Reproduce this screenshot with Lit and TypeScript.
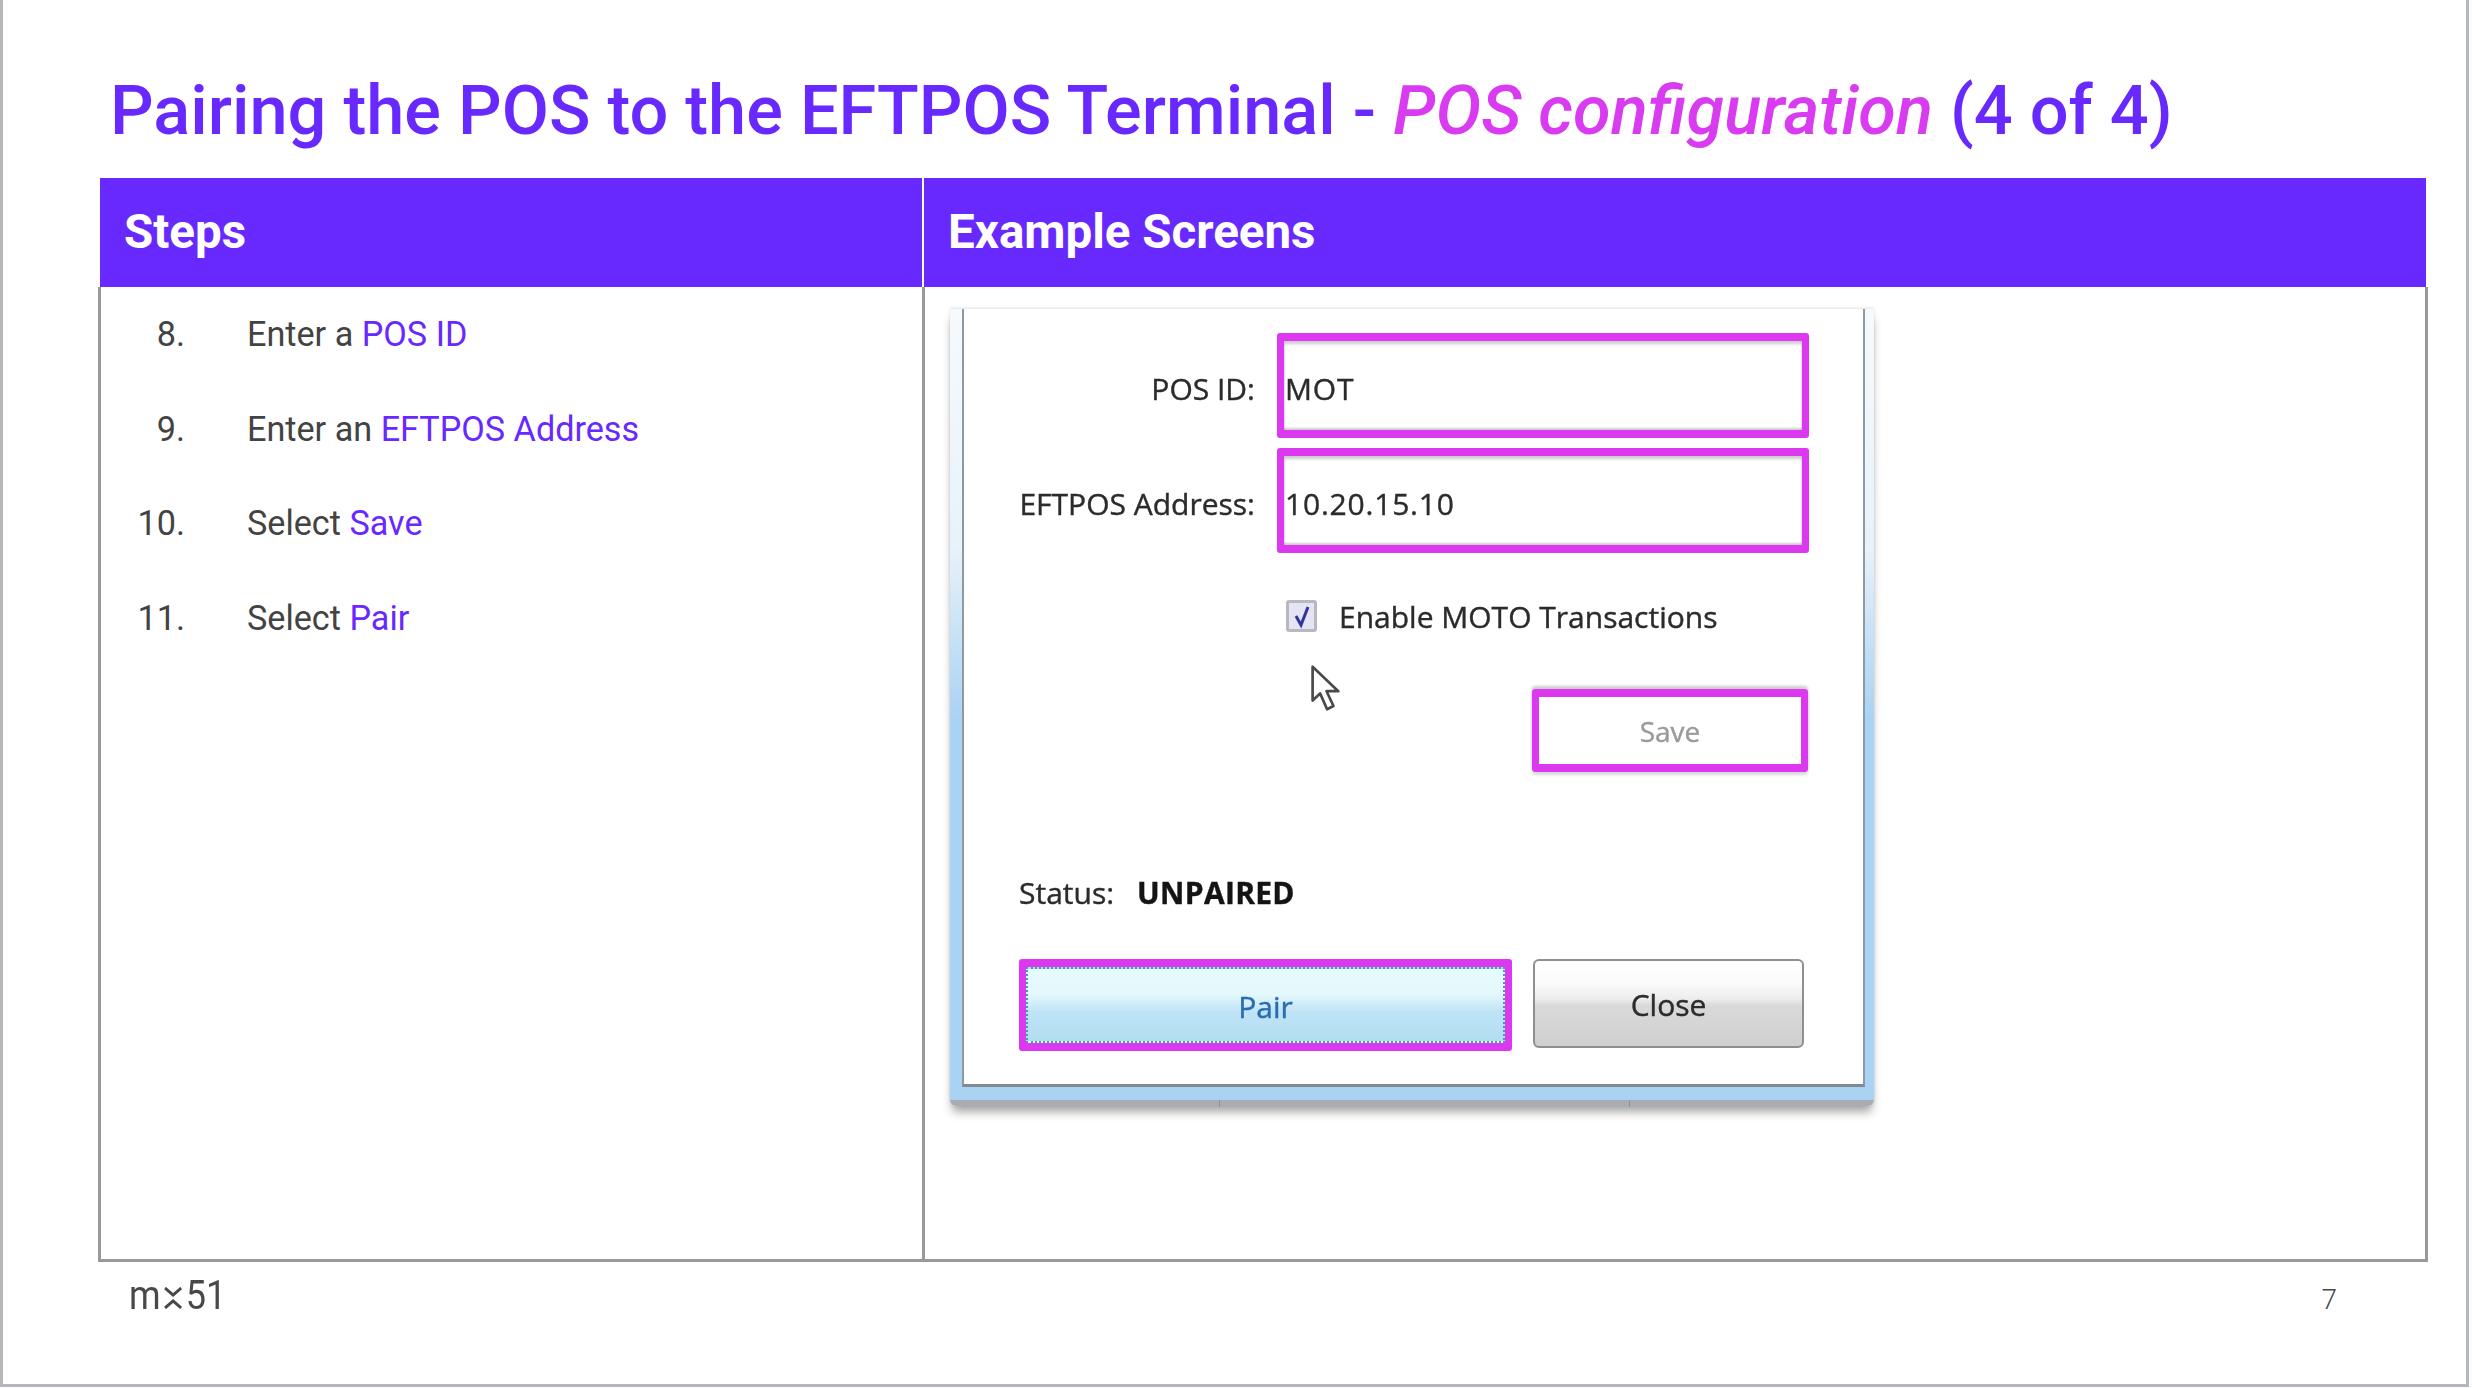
import {LitElement, css, html} from 'lit';
import {customElement} from 'lit/decorators.js';

const STEPS = [
  {num: '8.', text: 'Enter a ', key: 'POS ID'},
  {num: '9.', text: 'Enter an ', key: 'EFTPOS Address'},
  {num: '10.', text: 'Select ', key: 'Save'},
  {num: '11.', text: 'Select ', key: 'Pair'},
];

@customElement('pos-dialog')
export class PosDialog extends LitElement {
  render() {
    return html`
      <div class="frame">
        <div class="panel">
          <div class="form">
            <span class="label blur">POS ID:</span>
            <div class="field"><span class="value blur">MOT</span></div>
            <span class="label blur">EFTPOS Address:</span>
            <div class="field"><span class="value blur">10.20.15.10</span></div>
          </div>
          <div class="check-row">
            <span class="checkbox">
              <svg viewBox="0 0 30 30" width="30" height="30">
                <path d="M9 15l5 9 7-18" fill="none" stroke="#34349c" stroke-width="3" />
              </svg>
            </span>
            <span class="blur">Enable MOTO Transactions</span>
          </div>
          <svg class="cursor" viewBox="0 0 28 43" width="30" height="47" preserveAspectRatio="none">
            <path
              d="M1.5 1.5v31l7-6.500 6.500 14.500 6-3-6.500-13.500h11z"
              fill="#fff"
              stroke="#4a4a4a"
              stroke-width="2.500"
              stroke-linejoin="round"
            />
          </svg>
          <div class="save-row">
            <div class="save"><span class="blur">Save</span></div>
          </div>
          <div class="status blur"><span>Status:</span><b>UNPAIRED</b></div>
          <div class="buttons">
            <div class="pair">
              <div class="pair-inner"><span class="blur">Pair</span></div>
            </div>
            <div class="close"><span class="blur">Close</span></div>
          </div>
        </div>
        <i class="tick first"></i>
        <i class="tick second"></i>
      </div>
    `;
  }

  static styles = css`
    :host {
      display: block;
      width: 924px;
      font-family: 'Open Sans', 'Noto Sans', sans-serif;
      font-size: 30px;
      color: #2b2b2b;
    }
    .blur {
      filter: blur(0.7px);
      -webkit-text-stroke: 0.4px currentColor;
    }
    .frame {
      position: relative;
      padding: 0 9px 13px 12px;
      background: linear-gradient(#f6fafd 0%, #e8f2fa 30%, #a9d2f3 52%, #a9d2f3 100%);
      box-shadow: 0 8px 10px -2px rgba(0, 0, 0, 0.35), 0 -1px 3px rgba(0, 0, 0, 0.12);
      border-bottom: 6px solid #a7adb3;
      border-radius: 0 0 6px 6px;
    }
    .panel {
      position: relative;
      height: 778px;
      box-sizing: border-box;
      padding: 24px 0 0 55px;
      background: #fff;
      border-left: 2px solid #8d99a3;
      border-right: 2px solid #8d99a3;
      border-bottom: 3px solid #7f8a94;
    }
    .form {
      display: grid;
      grid-template-columns: 236px 532px;
      column-gap: 22px;
      row-gap: 10px;
      align-items: center;
    }
    .label {
      justify-self: end;
      padding-top: 6px;
      white-space: nowrap;
    }
    .field {
      display: flex;
      align-items: center;
      box-sizing: border-box;
      height: 105px;
      padding: 6px 0 0 1px;
      border: solid #dc38f0;
      border-width: 8px 7px;
      border-radius: 3px;
      box-shadow: inset 0 3px 3px rgba(0, 0, 0, 0.2), inset 0 -2px 2px rgba(0, 0, 0, 0.2);
      white-space: nowrap;
    }
    .value {
      letter-spacing: 0.8px;
    }
    .check-row {
      display: flex;
      align-items: center;
      gap: 22px;
      height: 32px;
      margin: 47px 0 0 267px;
      white-space: nowrap;
    }
    .checkbox {
      display: block;
      width: 31px;
      height: 32px;
      box-sizing: border-box;
      border: 3px solid #b8b8c0;
      border-radius: 3px;
      background: #e4e4f2;
      filter: blur(0.5px);
    }
    .checkbox svg {
      display: block;
      margin: -2px;
    }
    .cursor {
      position: absolute;
      left: 347px;
      top: 356px;
      filter: blur(0.6px);
    }
    .save-row {
      display: flex;
      margin: 57px 0 0 513px;
    }
    .save {
      display: flex;
      align-items: center;
      justify-content: center;
      box-sizing: border-box;
      width: 276px;
      height: 83px;
      border: solid #dc38f0;
      border-width: 8px 7px;
      border-radius: 3px;
      color: #9a9a9a;
      font-size: 28px;
      box-shadow: 0 -3px 3px rgba(0, 0, 0, 0.2), 0 3px 3px rgba(0, 0, 0, 0.15);
    }
    .status {
      display: flex;
      gap: 23px;
      height: 40px;
      margin-top: 100px;
      align-items: center;
      white-space: nowrap;
    }
    .status b {
      color: #141414;
      font-weight: 700;
      letter-spacing: 0.3px;
    }
    .buttons {
      display: flex;
      align-items: flex-start;
      gap: 21px;
      margin-top: 47px;
    }
    .pair {
      box-sizing: border-box;
      width: 493px;
      height: 92px;
      border: solid #dc38f0;
      border-width: 8px 7px;
      border-radius: 3px;
    }
    .pair-inner {
      display: flex;
      align-items: center;
      justify-content: center;
      height: 100%;
      box-sizing: border-box;
      padding-top: 2px;
      border: 2px dotted #3f9fb2;
      color: #2a6cb0;
      background: linear-gradient(#e6fbfd 0%, #e4f8fb 35%, #bfe3f6 60%, #b2deef 100%);
    }
    .close {
      display: flex;
      align-items: center;
      justify-content: center;
      box-sizing: border-box;
      width: 271px;
      height: 89px;
      padding-top: 2px;
      border: 2px solid #8f8f8f;
      border-radius: 6px;
      background: linear-gradient(#fff 0%, #fbfbfb 25%, #ececec 45%, #dadada 52%, #cfcfcf 100%);
    }
    .tick {
      position: absolute;
      top: 100%;
      width: 1px;
      height: 7px;
      background: #8b9299;
    }
    .tick.first {
      left: 269px;
    }
    .tick.second {
      left: 679px;
    }
  `;
}

@customElement('app-root')
export class AppRoot extends LitElement {
  render() {
    return html`
      <div class="slide">
        <h1>
          Pairing the POS to the EFTPOS Terminal - <em>POS configuration</em> (4 of 4)
        </h1>
        <div class="table">
          <div class="head">Steps</div>
          <div class="head">Example Screens</div>
          <div class="cell">
            <ol>
              ${STEPS.map(
                (step) => html`
                  <li>
                    <span class="num">${step.num}</span>
                    <span>${step.text}<span class="key">${step.key}</span></span>
                  </li>
                `
              )}
            </ol>
          </div>
          <div class="cell shots">
            <pos-dialog></pos-dialog>
          </div>
        </div>
        <footer>
          <div class="logo">
            <span>m</span>
            <svg viewBox="0 0 20 22" width="20" height="22">
              <path d="M1 1l9 7 9-7M1 21l9-7 9 7" fill="none" stroke="#484848" stroke-width="3" />
            </svg>
            <span>51</span>
          </div>
          <span class="page">7</span>
        </footer>
      </div>
    `;
  }

  static styles = css`
    :host {
      display: block;
      width: 2472px;
      height: 1388px;
      background: #f8fbff;
      font-family: Roboto, 'Liberation Sans', sans-serif;
    }
    .slide {
      width: 2469px;
      height: 1387px;
      box-sizing: border-box;
      background: #fff;
      border: solid #b7b7b7;
      border-width: 0 3px 3px 3px;
    }
    h1 {
      margin: 0;
      padding: 71px 0 27px 107px;
      font-size: 68.500px;
      line-height: 80px;
      font-weight: 500;
      color: #6829ff;
      white-space: nowrap;
    }
    em {
      color: #d93cf0;
      font-style: italic;
    }
    .table {
      display: grid;
      grid-template-columns: 824px 1506px;
      grid-template-rows: 109px 975px;
      width: 2330px;
      margin-left: 95px;
    }
    .head {
      display: flex;
      align-items: center;
      box-sizing: border-box;
      padding: 0 0 2px 24px;
      background: #6829ff;
      color: #fff;
      font-size: 47.500px;
      font-weight: 700;
      border-left: 2px solid #fff;
    }
    .head + .head {
      margin-right: 2px;
    }
    .cell {
      box-sizing: border-box;
      border-left: 3px solid #999;
      border-bottom: 3px solid #999;
    }
    .cell.shots {
      border-right: 3px solid #999;
      padding: 22px 0 0 25px;
    }
    ol {
      margin: 0;
      padding: 0;
      list-style: none;
      font-size: 34.200px;
      line-height: 94.600px;
      color: #434343;
    }
    li {
      display: flex;
    }
    .num {
      box-sizing: border-box;
      width: 84px;
      margin-right: 62px;
      text-align: right;
    }
    .key {
      color: #6829ff;
    }
    footer {
      display: flex;
      justify-content: space-between;
      padding: 11px 129px 0 126px;
      color: #484848;
    }
    .logo {
      display: flex;
      align-items: baseline;
      gap: 4px;
      font-size: 40px;
      line-height: 46px;
      transform: scaleX(0.9);
      transform-origin: left;
    }
    .page {
      margin-top: 7px;
      font-size: 28px;
      font-weight: 300;
      line-height: 40px;
    }
  `;
}
